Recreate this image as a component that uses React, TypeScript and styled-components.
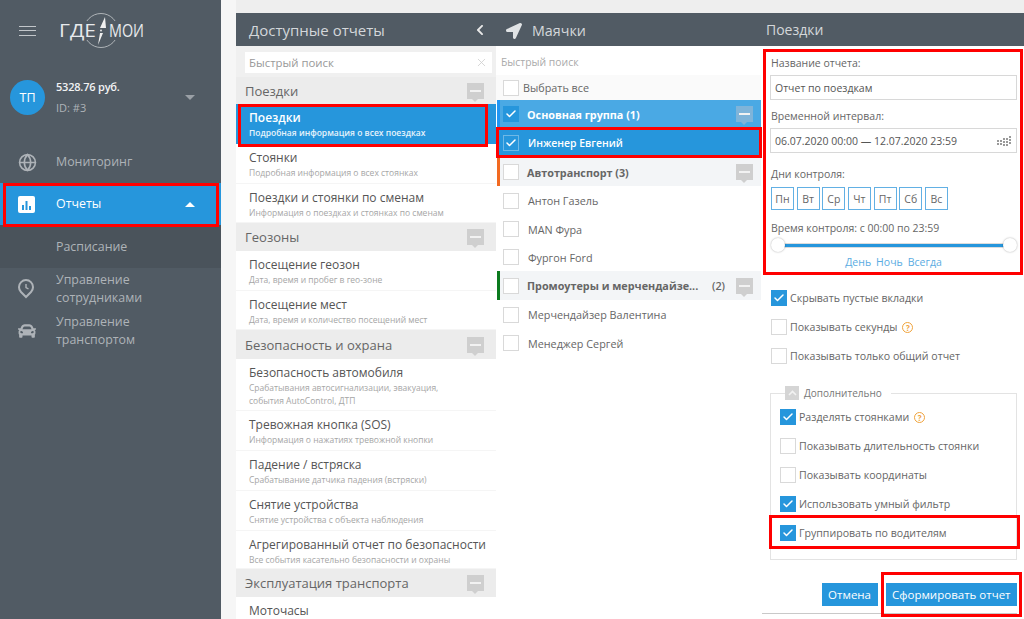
import React from 'react'
import styled, { createGlobalStyle } from 'styled-components'
import { FaCar, FaLocationArrow, FaChevronLeft } from 'react-icons/fa'
import { Check, Globe, X } from 'lucide-react'

const GlobalStyle = createGlobalStyle`
  html, body { margin: 0; padding: 0; }
  body { font-family: "Open Sans", "Noto Sans", sans-serif; background: #fff; color: #555; }
  * { box-sizing: border-box; }
`

const Page = styled.div`
  position: relative;
  width: 1024px;
  height: 619px;
  overflow: hidden;
  display: flex;
  background: #fff;
`

/* sidebar */
const Sidebar = styled.aside`
  width: 221px;
  flex: none;
  background: #515b64;
  color: #aeb3b8;
  display: flex;
  flex-direction: column;
`
const Brand = styled.div`
  height: 62px;
  padding-left: 19px;
  display: flex;
  align-items: center;
  gap: 21px;
`
const Burger = styled.div`
  width: 17px;
  height: 10px;
  border-top: 1px solid #c2c6ca;
  border-bottom: 1px solid #c2c6ca;
  position: relative;
  &::after {
    content: '';
    position: absolute;
    left: 0;
    right: 0;
    top: 3px;
    border-top: 1px solid #c2c6ca;
  }
`
const UserRow = styled.div`
  height: 62px;
  margin-top: 4px;
  padding-left: 10px;
  display: flex;
  align-items: center;
`
const Avatar = styled.div`
  width: 35px;
  height: 35px;
  border-radius: 50%;
  background: #2696dc;
  color: #fff;
  font-size: 12.5px;
  display: flex;
  align-items: center;
  justify-content: center;
`
const UserInfo = styled.div`
  margin-left: 11px;
  flex: 1;
`
const Balance = styled.div`
  font-size: 11px;
  font-weight: 600;
  line-height: 15px;
  color: #f2f3f4;
  letter-spacing: -0.2px;
`
const UserId = styled.div`
  font-size: 11px;
  line-height: 15px;
  margin-top: 6px;
  color: #aeb3b8;
`
const Caret = styled.div<{ $up?: boolean; $color: string }>`
  width: 0;
  height: 0;
  margin-right: 26px;
  border-left: 5px solid transparent;
  border-right: 5px solid transparent;
  ${p => (p.$up ? `border-bottom: 5px solid ${p.$color};` : `border-top: 5px solid ${p.$color};`)}
`
const Nav = styled.nav`
  margin-top: 13px;
  display: flex;
  flex-direction: column;
`
const NavItem = styled.div<{ $active?: boolean }>`
  height: 42px;
  padding-left: 18px;
  display: flex;
  align-items: center;
  font-size: 12.4px;
  color: ${p => (p.$active ? '#fff' : '#aeb3b8')};
  background: ${p => (p.$active ? '#2696dc' : 'transparent')};
`
const NavIcon = styled.span`
  width: 38px;
  flex: none;
  display: flex;
  align-items: center;
  font-size: 18px;
`
const NavLabel = styled.span`
  flex: 1;
  line-height: 18px;
`
const SubItem = styled.div`
  height: 43px;
  padding-left: 56px;
  display: flex;
  align-items: center;
  font-size: 12.4px;
  background: #4a535b;
`

/* shared column parts */
const Gutter = styled.div`
  width: 15px;
  flex: none;
  background: #f6f6f6;
`
const Main = styled.div`
  flex: 1;
  display: flex;
  flex-direction: column;
`
const TopStrip = styled.div`
  height: 13px;
  background: #eeeeee;
`
const Columns = styled.div`
  flex: 1;
  display: flex;
  min-height: 0;
`
const Column = styled.section<{ $w: number }>`
  width: ${p => p.$w}px;
  flex: none;
  display: flex;
  flex-direction: column;
`
const ColHead = styled.header<{ $pad?: number; $size?: number }>`
  height: 33px;
  background: #515b64;
  color: #d4d7da;
  font-size: ${p => p.$size ?? 15}px;
  display: flex;
  align-items: center;
  padding: 0 10px 0 ${p => p.$pad ?? 13}px;
  justify-content: space-between;
  flex: none;
`
const BeaconTitle = styled.div`
  display: flex;
  align-items: center;
  gap: 10px;
  font-size: 14.3px;
  line-height: 18px;
  padding-top: 2px;
`
const CollapseBox = styled.div<{ $blue?: boolean }>`
  width: 17px;
  height: 16px;
  flex: none;
  position: relative;
  background: ${p => (p.$blue ? '#7fb4d9' : '#cfcfcf')};
  &::before {
    content: '';
    position: absolute;
    left: 3px;
    right: 3px;
    top: 7px;
    border-top: 2px solid #f2f2f2;
  }
  &::after {
    content: '';
    position: absolute;
    left: 5px;
    bottom: -3px;
    border-left: 3px solid transparent;
    border-right: 3px solid transparent;
    border-top: 3px solid ${p => (p.$blue ? '#7fb4d9' : '#cfcfcf')};
  }
`

/* reports */
const SearchWrap = styled.div`
  height: 31px;
  background: #f0f0f0;
  padding: 6px 4px 4px 9px;
`
const SearchBox = styled.div`
  height: 21px;
  background: #fff;
  padding: 0 4px 0 4px;
  display: flex;
  align-items: center;
  justify-content: space-between;
  font-size: 11.4px;
  color: #999;
`
const GroupHead = styled.div<{ $h: number }>`
  height: ${p => p.$h}px;
  background: #ececec;
  padding: 0 12px 0 9px;
  display: flex;
  align-items: center;
  justify-content: space-between;
  font-size: 13px;
  color: #666;
  flex: none;
`
const ReportItem = styled.div<{ $active?: boolean; $h?: number }>`
  height: ${p => p.$h ?? 40}px;
  flex: none;
  padding: 6px 4px 0 13px;
  background: ${p => (p.$active ? '#2696dc' : '#fff')};
  border-bottom: 1px solid ${p => (p.$active ? '#2696dc' : '#f5f5f5')};
`
const ReportName = styled.div<{ $active?: boolean }>`
  font-size: 12px;
  line-height: 16px;
  white-space: nowrap;
  color: ${p => (p.$active ? '#fff' : '#555')};
  font-weight: ${p => (p.$active ? 600 : 400)};
`
const ReportDesc = styled.div<{ $active?: boolean }>`
  font-size: 8.5px;
  line-height: 13px;
  white-space: pre-line;
  color: ${p => (p.$active ? '#e6f3fb' : '#a6a6a6')};
  font-weight: ${p => (p.$active ? 600 : 400)};
`

/* beacons */
const BeaconSearch = styled.div`
  height: 29px;
  padding: 9px 0 0 5px;
  font-size: 10.4px;
  color: #aaa;
`
const Row = styled.div<{ $h: number; $bg?: string; $bar?: string; $fg?: string }>`
  height: ${p => p.$h}px;
  flex: none;
  display: flex;
  align-items: center;
  padding-left: ${p => (p.$bar ? 3 : 7)}px;
  padding-right: 8px;
  background: ${p => p.$bg ?? '#fff'};
  color: ${p => p.$fg ?? '#666'};
  border-left: ${p => (p.$bar ? `3px solid ${p.$bar}` : 'none')};
  margin-left: ${p => (p.$bar ? '1px' : '0')};
  font-size: 10.8px;
`
const CheckBox = styled.span<{ $on?: boolean; $outline?: boolean }>`
  width: 16px;
  height: 16px;
  flex: none;
  display: inline-flex;
  align-items: center;
  justify-content: center;
  background: ${p => (p.$on ? '#2696dc' : '#fff')};
  border: 1px solid ${p => (p.$outline ? '#6fb8e6' : p.$on ? '#2696dc' : '#d9d9d9')};
  color: #fff;
`
const RowLabel = styled.span<{ $gap?: number; $bold?: boolean; $strong?: boolean }>`
  margin-left: ${p => p.$gap ?? 9}px;
  font-weight: ${p => (p.$bold ? 700 : p.$strong ? 600 : 400)};
  font-size: ${p => (p.$strong ? '10.4px' : 'inherit')};
  flex: 1;
  white-space: nowrap;
`
const RowCount = styled.span`
  font-weight: 600;
  margin-right: 11px;
`

/* settings */
const SettingsBody = styled.div`
  padding: 10px 7px 0 9px;
  display: flex;
  flex-direction: column;
  flex: 1;
`
const FieldLabel = styled.div<{ $top?: number }>`
  font-size: 10.5px;
  line-height: 14px;
  color: #666;
  margin-left: 1px;
  margin-top: ${p => p.$top ?? 0}px;
`
const Field = styled.div`
  height: 25px;
  margin-top: 5px;
  border: 1px solid #d8d8d8;
  padding: 0 3px 0 4px;
  font-size: 10.5px;
  color: #555;
  display: flex;
  align-items: center;
  justify-content: space-between;
`
const Days = styled.div`
  display: flex;
  gap: 2.67px;
  margin: 6px 0 0 1px;
`
const Day = styled.div`
  width: 23px;
  height: 23px;
  border: 1px solid #62b0e4;
  font-size: 10.5px;
  color: #666;
  display: flex;
  align-items: center;
  justify-content: center;
`
const SliderTrack = styled.div`
  position: relative;
  margin: 3px 0 0 1px;
  height: 14px;
  display: flex;
  align-items: center;
`
const SliderLine = styled.div`
  flex: 1;
  height: 5px;
  margin: 0 7px;
  background: #2696dc;
  border-top: 1px solid #dcdcdc;
  border-bottom: 1px solid #dcdcdc;
`
const Thumb = styled.span<{ $right?: boolean }>`
  position: absolute;
  top: 0;
  ${p => (p.$right ? 'right: 0;' : 'left: 0;')}
  width: 14px;
  height: 14px;
  border-radius: 50%;
  background: #fff;
  box-shadow: 0 0 2px rgba(0, 0, 0, 0.35);
`
const Presets = styled.div`
  display: flex;
  justify-content: center;
  gap: 5px;
  margin-top: 3px;
  font-size: 10.5px;
  line-height: 14px;
  color: #5aace2;
`
const OptionList = styled.div<{ $top?: number; $left?: number }>`
  margin-top: ${p => p.$top ?? 0}px;
  margin-left: ${p => p.$left ?? 0}px;
  display: flex;
  flex-direction: column;
  gap: 13px;
`
const Option = styled.div`
  display: flex;
  align-items: center;
  height: 16px;
  font-size: 10.6px;
  color: #666;
`
const OptionLabel = styled.span`
  margin-left: 3px;
`
const Hint = styled.span`
  width: 11px;
  height: 11px;
  margin-left: 5px;
  border: 1px solid #f0a33c;
  border-radius: 50%;
  color: #f0a33c;
  font-size: 8px;
  font-weight: 700;
  display: inline-flex;
  align-items: center;
  justify-content: center;
`
const ExtraBox = styled.fieldset`
  margin: 22px 0 0 0;
  padding: 9px 0 0 9px;
  height: 174px;
  border: 1px solid #e3e3e3;
  min-width: 0;
`
const ExtraLegend = styled.legend`
  margin-left: 5px;
  padding: 0 9px 0 0;
  font-size: 10px;
  line-height: 14px;
  color: #777;
  display: flex;
  align-items: center;
  gap: 5px;
`
const ExtraToggle = styled.span`
  width: 14px;
  height: 14px;
  background: #d5d5d5;
  display: inline-flex;
  align-items: center;
  justify-content: center;
`
const Actions = styled.div`
  margin-top: 23px;
  display: flex;
  justify-content: flex-end;
  gap: 8px;
`
const Button = styled.div`
  height: 23px;
  padding: 0 6.5px;
  background: #2696dc;
  color: #fff;
  font-size: 11.5px;
  display: flex;
  align-items: center;
`
const FootLine = styled.div`
  margin: 7px 0 0 -8px;
  border-top: 1px solid #c9c9c9;
`

/* red annotation frames drawn over the screenshot */
const Frame = styled.div<{ $x: number; $y: number; $w: number; $h: number }>`
  position: absolute;
  left: ${p => p.$x}px;
  top: ${p => p.$y}px;
  width: ${p => p.$w}px;
  height: ${p => p.$h}px;
  border: 3px solid #f00;
  pointer-events: none;
`

const Logo = () => (
  <svg width="100" height="38" viewBox="0 0 100 38" fill="none">
    <circle cx="44" cy="18.5" r="17" stroke="#c5c9cc" strokeWidth="0.8" />
    <rect x="24" y="9" width="40" height="19" fill="#515b64" />
    <path d="M48 5 L49 16 L43 16 Z M43 21 L46 21 L41 33 Z" fill="#f0f0f0" />
    <circle cx="44" cy="18.5" r="0.9" fill="#f0f0f0" />
    <text x="2" y="25" fill="#e8eaec" fontSize="18" fontFamily="Open Sans, sans-serif" textLength="37" lengthAdjust="spacingAndGlyphs">ГДЕ</text>
    <text x="52" y="25" fill="#e8eaec" fontSize="18" fontFamily="Open Sans, sans-serif" textLength="35" lengthAdjust="spacingAndGlyphs">МОИ</text>
  </svg>
)

const ChartIcon = () => (
  <svg width="17" height="17" viewBox="0 0 17 17">
    <rect width="17" height="17" rx="2" fill="#fff" />
    <path d="M4 9h2v5H4zM7.5 5h2v9h-2zM11 10h2v4h-2z" fill="#2696dc" />
  </svg>
)

const ClockPinIcon = () => (
  <svg width="16" height="20" viewBox="0 0 16 20" fill="none" stroke="#aeb3b8" strokeWidth="2">
    <path d="M8 18 L3 13 A7 7 0 1 1 13 13 Z" />
    <path d="M8 5 V8.5 L10.5 10" strokeWidth="1.4" />
  </svg>
)

const reportGroups = [
  {
    title: 'Поездки',
    h: 27,
    items: [
      { name: 'Поездки', desc: 'Подробная информация о всех поездках', active: true },
      { name: 'Стоянки', desc: 'Подробная информация о всех стоянках' },
      { name: 'Поездки и стоянки по сменам', desc: 'Информация о поездках и стоянках по сменам', h: 39 },
    ],
  },
  {
    title: 'Геозоны',
    h: 28,
    items: [
      { name: 'Посещение геозон', desc: 'Дата, время и пробег в гео-зоне' },
      { name: 'Посещение мест', desc: 'Дата, время и количество посещений мест', h: 39 },
    ],
  },
  {
    title: 'Безопасность и охрана',
    h: 29,
    items: [
      { name: 'Безопасность автомобиля', desc: 'Срабатывания автосигнализации, эвакуация,\nсобытия AutoControl, ДТП', h: 52 },
      { name: 'Тревожная кнопка (SOS)', desc: 'Информация о нажатиях тревожной кнопки' },
      { name: 'Падение / встряска', desc: 'Срабатывание датчика падения (встряски)' },
      { name: 'Снятие устройства', desc: 'Снятие устройства с объекта наблюдения' },
      { name: 'Агрегированный отчет по безопасности', desc: 'Все события касательно безопасности и охраны', h: 38 },
    ],
  },
  {
    title: 'Эксплуатация транспорта',
    h: 28,
    items: [{ name: 'Моточасы', desc: '' }],
  },
]

const days = ['Пн', 'Вт', 'Ср', 'Чт', 'Пт', 'Сб', 'Вс']

const Box = ({ on, outline }: { on?: boolean; outline?: boolean }) => (
  <CheckBox $on={on} $outline={outline}>{on && <Check size={12} strokeWidth={3} />}</CheckBox>
)

const App = () => {
  return (
    <Page>
      <GlobalStyle />
      <Sidebar>
        <Brand>
          <Burger />
          <Logo />
        </Brand>
        <UserRow>
          <Avatar>ТП</Avatar>
          <UserInfo>
            <Balance>5328.76 руб.</Balance>
            <UserId>ID: #3</UserId>
          </UserInfo>
          <Caret $color="#9aa0a6" />
        </UserRow>
        <Nav>
          <NavItem><NavIcon><Globe size={19} strokeWidth={2} /></NavIcon><NavLabel>Мониторинг</NavLabel></NavItem>
          <NavItem $active><NavIcon><ChartIcon /></NavIcon><NavLabel>Отчеты</NavLabel><Caret $up $color="#fff" /></NavItem>
          <SubItem>Расписание</SubItem>
          <NavItem><NavIcon><ClockPinIcon /></NavIcon><NavLabel>Управление<br />сотрудниками</NavLabel></NavItem>
          <NavItem><NavIcon><FaCar /></NavIcon><NavLabel>Управление<br />транспортом</NavLabel></NavItem>
        </Nav>
      </Sidebar>
      <Gutter />
      <Main>
        <TopStrip />
        <Columns>
          <Column $w={260}>
            <ColHead>Доступные отчеты<FaChevronLeft size={12} color="#e8e8e8" /></ColHead>
            <SearchWrap>
              <SearchBox>Быстрый поиск<X size={13} color="#cfcfcf" strokeWidth={1.5} /></SearchBox>
            </SearchWrap>
            {reportGroups.map(group => (
              <React.Fragment key={group.title}>
                <GroupHead $h={group.h}>{group.title}<CollapseBox /></GroupHead>
                {group.items.map(item => (
                  <ReportItem key={item.name} $active={item.active} $h={item.h}>
                    <ReportName $active={item.active}>{item.name}</ReportName>
                    <ReportDesc $active={item.active}>{item.desc}</ReportDesc>
                  </ReportItem>
                ))}
              </React.Fragment>
            ))}
          </Column>
          <Column $w={265}>
            <ColHead $pad={10}>
              <BeaconTitle><FaLocationArrow size={16} color="#e0e3e5" />Маячки</BeaconTitle>
            </ColHead>
            <BeaconSearch>Быстрый поиск</BeaconSearch>
            <Row $h={25} $bg="#fafafa"><Box /><RowLabel $gap={4}>Выбрать все</RowLabel></Row>
            <Row $h={28} $bg="#4aa9e4" $bar="#2196f3" $fg="#fff"><Box on /><RowLabel $gap={8} $bold>Основная группа (1)</RowLabel><CollapseBox $blue /></Row>
            <Row $h={30} $bg="#2696dc" $fg="#fff"><Box on outline /><RowLabel $strong>Инженер Евгений</RowLabel></Row>
            <Row $h={28} $bg="#f3f5f7" $bar="#f26a21"><Box /><RowLabel $gap={8} $bold>Автотранспорт (3)</RowLabel><CollapseBox /></Row>
            <Row $h={29}><Box /><RowLabel>Антон Газель</RowLabel></Row>
            <Row $h={28}><Box /><RowLabel>MAN Фура</RowLabel></Row>
            <Row $h={28}><Box /><RowLabel>Фургон Ford</RowLabel></Row>
            <Row $h={29} $bg="#f3f5f7" $bar="#0b7a1e"><Box /><RowLabel $gap={8} $bold>Промоутеры и мерчендайзе...</RowLabel><RowCount>(2)</RowCount><CollapseBox /></Row>
            <Row $h={29}><Box /><RowLabel>Мерчендайзер Валентина</RowLabel></Row>
            <Row $h={28}><Box /><RowLabel>Менеджер Сергей</RowLabel></Row>
          </Column>
          <Column $w={263}>
            <ColHead $pad={5} $size={14}>Поездки</ColHead>
            <SettingsBody>
              <FieldLabel>Название отчета:</FieldLabel>
              <Field>Отчет по поездкам</Field>
              <FieldLabel $top={9}>Временной интервал:</FieldLabel>
              <Field>06.07.2020 00:00 — 12.07.2020 23:59
                <svg width="16" height="10" viewBox="0 0 16 10" fill="#9a9a9a">
                  <path d="M0 4h2v2H0zM3 4h2v2H3zM6 2h2v2H6zM9 2h2v2H9zM12 0h2v2h-2zM6 5h2v2H6zM9 5h2v2H9zM12 3h2v2h-2zM0 7h2v2H0zM3 7h2v2H3zM6 8h2v2H6zM9 8h2v2H9zM12 6h2v2h-2z" />
                </svg>
              </Field>
              <FieldLabel $top={14}>Дни контроля:</FieldLabel>
              <Days>{days.map(d => <Day key={d}>{d}</Day>)}</Days>
              <FieldLabel $top={11}>Время контроля: с 00:00 по 23:59</FieldLabel>
              <SliderTrack><SliderLine /><Thumb /><Thumb $right /></SliderTrack>
              <Presets><span>День</span><span>Ночь</span><span>Всегда</span></Presets>
              <OptionList $top={21} $left={1}>
                <Option><Box on /><OptionLabel>Скрывать пустые вкладки</OptionLabel></Option>
                <Option><Box /><OptionLabel>Показывать секунды</OptionLabel><Hint>?</Hint></Option>
                <Option><Box /><OptionLabel>Показывать только общий отчет</OptionLabel></Option>
              </OptionList>
              <ExtraBox>
                <ExtraLegend><ExtraToggle>
                  <svg width="9" height="6" viewBox="0 0 9 6" fill="none" stroke="#f2f2f2" strokeWidth="1.6"><path d="M1 5l3.5-3.5L8 5" /></svg>
                </ExtraToggle>Дополнительно</ExtraLegend>
                <OptionList>
                  <Option><Box on /><OptionLabel>Разделять стоянками</OptionLabel><Hint>?</Hint></Option>
                  <Option><Box /><OptionLabel>Показывать длительность стоянки</OptionLabel></Option>
                  <Option><Box /><OptionLabel>Показывать координаты</OptionLabel></Option>
                  <Option><Box on /><OptionLabel>Использовать умный фильтр</OptionLabel></Option>
                  <Option><Box on /><OptionLabel>Группировать по водителям</OptionLabel></Option>
                </OptionList>
              </ExtraBox>
              <Actions>
                <Button>Отмена</Button>
                <Button>Сформировать отчет</Button>
              </Actions>
              <FootLine />
            </SettingsBody>
          </Column>
        </Columns>
      </Main>
      <Frame $x={3} $y={183} $w={216} $h={44} />
      <Frame $x={238} $y={104} $w={250} $h={43} />
      <Frame $x={496} $y={127} $w={266} $h={31} />
      <Frame $x={763} $y={49} $w={260} $h={226} />
      <Frame $x={769} $y={515} $w={251} $h={34} />
      <Frame $x={881} $y={572} $w={141} $h={45} />
    </Page>
  )
}

export default App
